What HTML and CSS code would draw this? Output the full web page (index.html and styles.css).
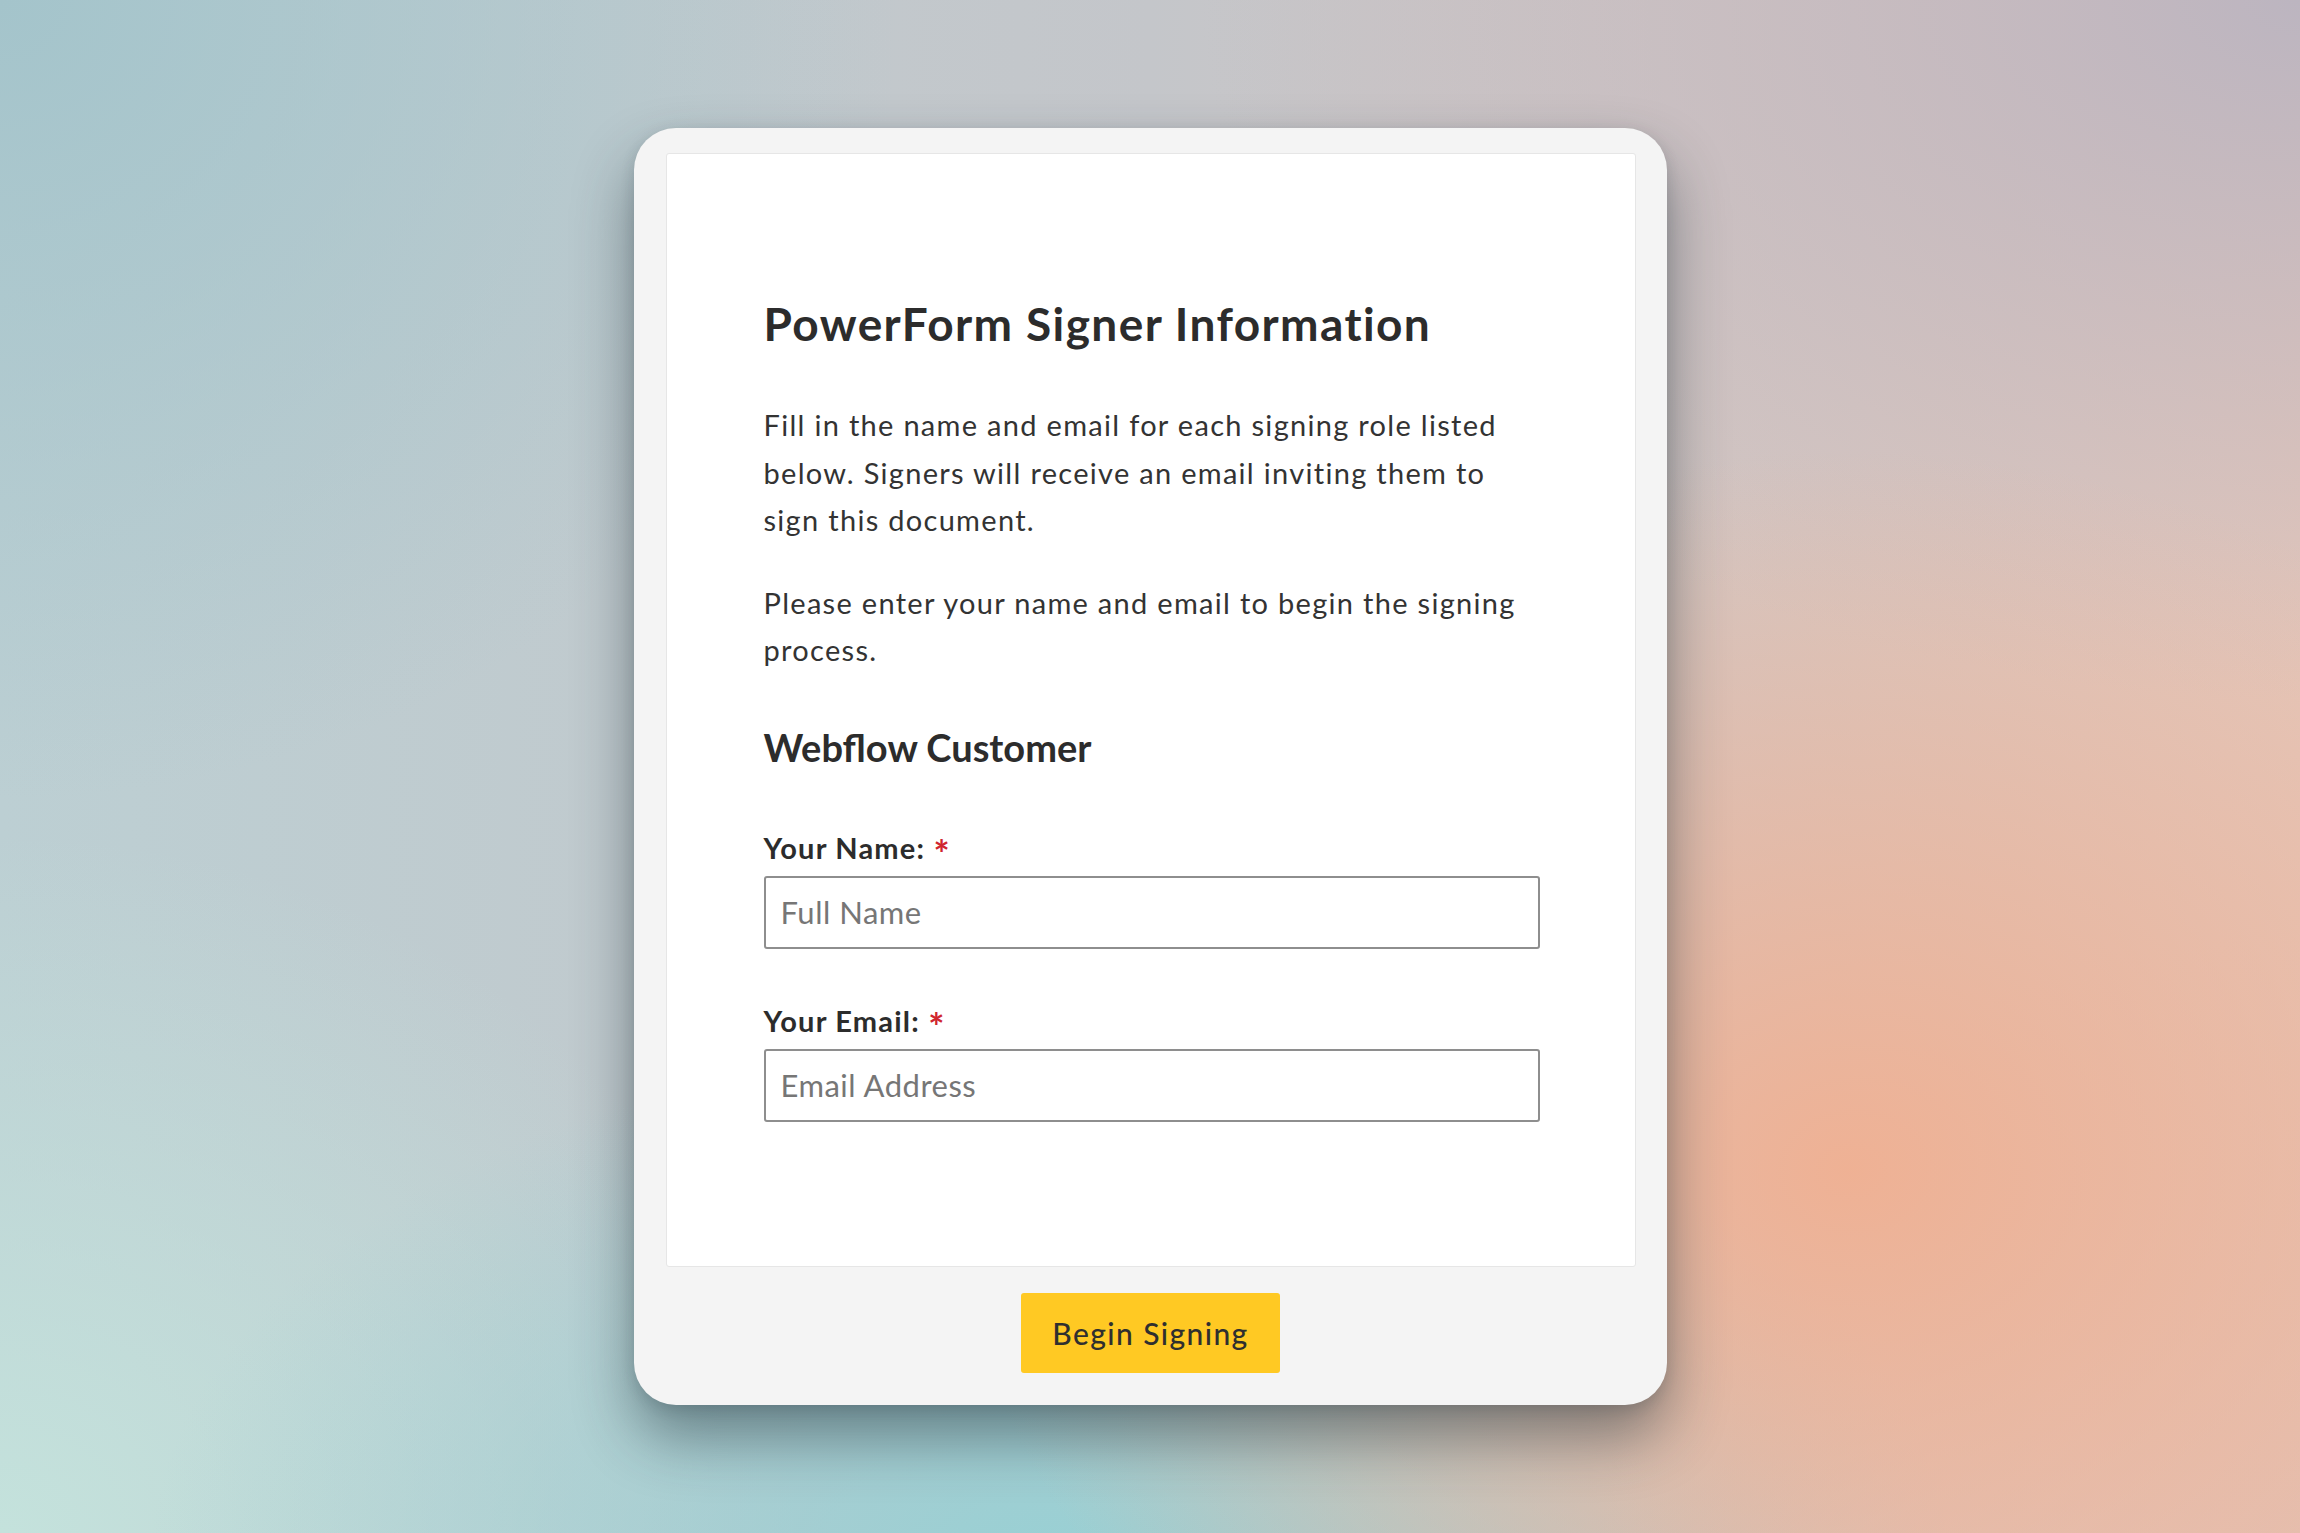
FILE: index.html
```html
<!DOCTYPE html>
<html lang="en">
<head>
<meta charset="utf-8">
<title>PowerForm Signer Information</title>
<link rel="stylesheet" href="styles.css">
</head>
<body>
<main class="stage">
  <form class="card">
    <section class="panel">
      <h1 class="title">PowerForm Signer Information</h1>
      <p class="intro">Fill in the name and email for each signing role listed below. Signers will receive an email inviting them to sign this document.</p>
      <p class="intro intro-second">Please enter your name and email to begin the signing process.</p>
      <h2 class="role">Webflow Customer</h2>
      <div class="field">
        <label class="label" for="name">Your Name: <span class="req">*</span></label>
        <input class="input" id="name" type="text" placeholder="Full Name">
      </div>
      <div class="field">
        <label class="label" for="email">Your Email: <span class="req">*</span></label>
        <input class="input" id="email" type="email" placeholder="Email Address">
      </div>
    </section>
    <div class="actions">
      <button class="btn" type="button">Begin Signing</button>
    </div>
  </form>
</main>
</body>
</html>
```
FILE: styles.css
```css
html, body {
  margin: 0;
  padding: 0;
}
body {
  width: 2300px;
  height: 1533px;
  overflow: hidden;
  font-family: Lato, "Noto Sans", "Liberation Sans", sans-serif;
  color: #333;
  background-color: #c4c6c8;
  background-image:
    radial-gradient(ellipse 900px 720px at 1850px 1170px, rgba(240,176,146,0.95), rgba(240,176,146,0) 100%),
    radial-gradient(ellipse 700px 600px at 2300px 1533px, rgba(226,194,182,0.9), rgba(226,194,182,0) 100%),
    radial-gradient(ellipse 900px 520px at 1050px 1560px, rgba(152,208,212,1), rgba(152,208,212,0) 100%),
    radial-gradient(ellipse 800px 700px at 0px 1533px, rgba(196,226,220,1), rgba(196,226,220,0) 100%),
    radial-gradient(ellipse 900px 800px at 0px 0px, rgba(164,196,203,1), rgba(164,196,203,0) 100%),
    radial-gradient(ellipse 1100px 700px at 2300px 0px, rgba(188,181,192,1), rgba(188,181,192,0) 100%),
    linear-gradient(90deg, #bccfd3 0%, #c4c6ca 50%, #e3c6ba 100%);
}
.stage {
  display: flex;
  justify-content: center;
  padding-top: 128px;
}
.card {
  width: 1033px;
  box-sizing: border-box;
  background: #f4f4f4;
  border-radius: 42px;
  padding: 25px 31px 32px 32px;
  box-shadow: 0 32px 60px rgba(30, 45, 55, 0.48), 0 4px 14px rgba(30, 45, 55, 0.15);
}
.panel {
  background: #fff;
  border: 1px solid #e6e6e6;
  border-radius: 3px;
  padding: 142px 95px 144px 97px;
}
.title {
  margin: 0;
  font-size: 46px;
  line-height: 55px;
  font-weight: 700;
  letter-spacing: 1.4px;
  color: #2c2c2c;
}
.intro {
  margin: 50px 0 0;
  max-width: 768px;
  font-size: 29px;
  line-height: 47.5px;
  letter-spacing: 1.3px;
  color: #333;
}
.intro-second {
  margin-top: 35px;
}
.role {
  margin: 50px 0 0;
  font-size: 38px;
  line-height: 46px;
  font-weight: 700;
  color: #2c2c2c;
}
.field {
  display: flex;
  flex-direction: column;
  gap: 11px;
  margin-top: 61px;
}
.field + .field {
  margin-top: 55px;
}
.label {
  font-size: 29px;
  line-height: 34px;
  font-weight: 700;
  letter-spacing: 1.2px;
  color: #2c2c2c;
}
.req {
  color: #d0262f;
  font-size: 38px;
  line-height: 0;
  letter-spacing: 0;
  vertical-align: -9px;
}
.input {
  box-sizing: border-box;
  width: 100%;
  height: 73px;
  margin: 0;
  border: 2px solid #8e8e8e;
  border-radius: 3px;
  padding: 0 15px;
  font-family: Lato, "Noto Sans", "Liberation Sans", sans-serif;
  font-size: 31px;
  letter-spacing: 0.5px;
  color: #333;
  background: #fff;
  outline: none;
}
.input::placeholder {
  color: #767676;
}
.actions {
  display: flex;
  justify-content: center;
  padding-top: 26px;
}
.btn {
  width: 259px;
  height: 80px;
  border: none;
  border-radius: 3px;
  background: #ffc923;
  color: #2f2f2f;
  font-family: Lato, "Noto Sans", "Liberation Sans", sans-serif;
  font-size: 30px;
  font-weight: 500;
  letter-spacing: 1.4px;
  cursor: pointer;
}
```
